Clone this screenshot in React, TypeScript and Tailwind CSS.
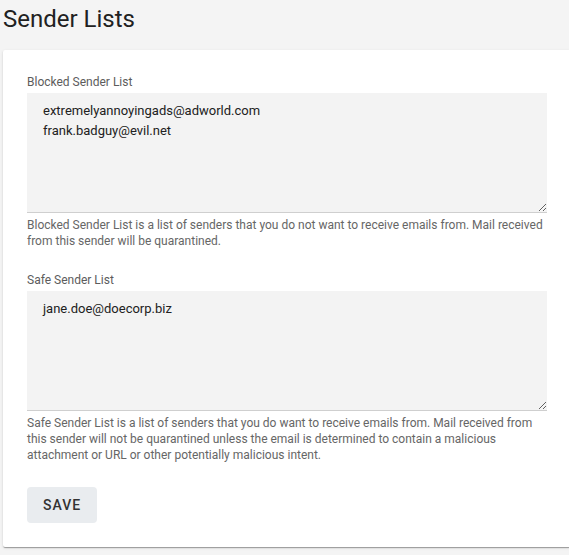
import React from "react";

interface SenderListProps {
  label: string;
  value: string;
  helper: string;
  className?: string;
}

const SenderList = (props: SenderListProps) => {
  return (
    <div className={`flex flex-col ${props.className ?? ""}`}>
      <label className="text-xs leading-4 text-[#5c5c5c]">{props.label}</label>
      <textarea
        defaultValue={props.value}
        className="mt-[3px] h-[120px] w-full bg-[#f3f3f3] border-0 border-b border-[#cfcfcf] px-4 py-2 text-[13px] leading-5 text-[#212121] outline-none"
      />
      <p className="mt-1 text-xs leading-4 text-[#666666]">{props.helper}</p>
    </div>
  );
};

export default function App() {
  return (
    <div className="w-[569px] h-[555px] overflow-hidden bg-[#f4f4f4] pl-[3px] pt-[3px] font-['Roboto',sans-serif]">
      <h1 className="text-2xl leading-8 font-normal text-[#212121]">Sender Lists</h1>
      <div className="mt-[15px] w-[568px] bg-white rounded-[2px] shadow-[0_2px_1px_-1px_rgba(0,0,0,0.2),0_1px_1px_0_rgba(0,0,0,0.14),0_1px_3px_0_rgba(0,0,0,0.12)] p-6">
        <SenderList
          label="Blocked Sender List"
          value={"extremelyannoyingads@adworld.com\nfrank.badguy@evil.net"}
          helper="Blocked Sender List is a list of senders that you do not want to receive emails from. Mail received from this sender will be quarantined."
        />
        <SenderList
          className="mt-[23px]"
          label="Safe Sender List"
          value="jane.doe@doecorp.biz"
          helper="Safe Sender List is a list of senders that you do want to receive emails from. Mail received from this sender will not be quarantined unless the email is determined to contain a malicious attachment or URL or other potentially malicious intent."
        />
        <button className="mt-6 h-9 px-4 rounded bg-[#e9ecef] text-sm font-medium uppercase tracking-[1px] text-[#333]">
          Save
        </button>
      </div>
    </div>
  );
}
